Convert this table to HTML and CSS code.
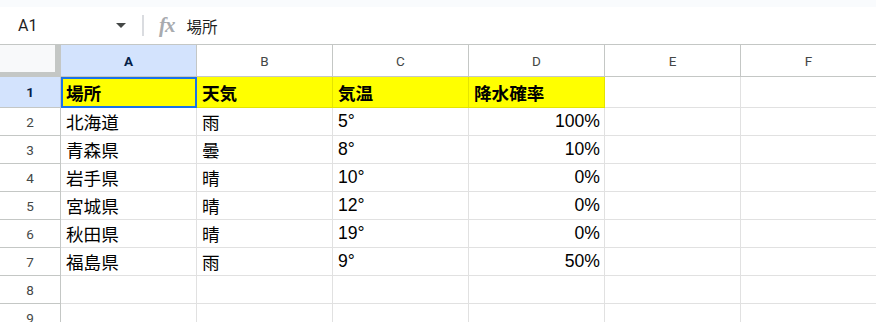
FILE: index.html
```html
<!DOCTYPE html>
<html lang="ja">
<head>
    <meta charset="UTF-8">
    <meta name="viewport" content="width=device-width, initial-scale=1.0">
    <title>天気シート</title>
    <link rel="stylesheet" href="styles.css">
</head>
<body>
    <div class="topbar"></div>
    <!-- 이름 상자 + 수식 입력줄 -->
    <div class="formula-bar">
        <div class="name-box">
            <span class="name-ref">A1</span>
            <span class="name-arrow"></span>
        </div>
        <span class="fb-sep"></span>
        <span class="fx">fx</span>
        <span class="fb-value">場所</span>
    </div>

    <div class="sheet">
        <div class="corner"></div>
        <div class="col-head selected">A</div>
        <div class="col-head">B</div>
        <div class="col-head">C</div>
        <div class="col-head">D</div>
        <div class="col-head">E</div>
        <div class="col-head">F</div>

        <div class="row-head selected">1</div>
        <div class="cell hl bold active">場所</div>
        <div class="cell hl bold">天気</div>
        <div class="cell hl bold">気温</div>
        <div class="cell hl bold">降水確率</div>
        <div class="cell"></div>
        <div class="cell"></div>

        <div class="row-head">2</div>
        <div class="cell">北海道</div>
        <div class="cell">雨</div>
        <div class="cell">5°</div>
        <div class="cell num">100%</div>
        <div class="cell"></div>
        <div class="cell"></div>

        <div class="row-head">3</div>
        <div class="cell">青森県</div>
        <div class="cell">曇</div>
        <div class="cell">8°</div>
        <div class="cell num">10%</div>
        <div class="cell"></div>
        <div class="cell"></div>

        <div class="row-head">4</div>
        <div class="cell">岩手県</div>
        <div class="cell">晴</div>
        <div class="cell">10°</div>
        <div class="cell num">0%</div>
        <div class="cell"></div>
        <div class="cell"></div>

        <div class="row-head">5</div>
        <div class="cell">宮城県</div>
        <div class="cell">晴</div>
        <div class="cell">12°</div>
        <div class="cell num">0%</div>
        <div class="cell"></div>
        <div class="cell"></div>

        <div class="row-head">6</div>
        <div class="cell">秋田県</div>
        <div class="cell">晴</div>
        <div class="cell">19°</div>
        <div class="cell num">0%</div>
        <div class="cell"></div>
        <div class="cell"></div>

        <div class="row-head">7</div>
        <div class="cell">福島県</div>
        <div class="cell">雨</div>
        <div class="cell">9°</div>
        <div class="cell num">50%</div>
        <div class="cell"></div>
        <div class="cell"></div>

        <div class="row-head">8</div>
        <div class="cell"></div>
        <div class="cell"></div>
        <div class="cell"></div>
        <div class="cell"></div>
        <div class="cell"></div>
        <div class="cell"></div>

        <div class="row-head">9</div>
        <div class="cell"></div>
        <div class="cell"></div>
        <div class="cell"></div>
        <div class="cell"></div>
        <div class="cell"></div>
        <div class="cell"></div>
    </div>
</body>
</html>
```

FILE: styles.css
```css
*{margin:0; padding:0; box-sizing:border-box;}
html,body{height:100%;}
body{
    overflow:hidden;
    background-color:#fff;
    font-family:Roboto, "Noto Sans CJK JP", sans-serif;
    color:#1f1f1f;
}

.topbar{
    height:7px;
    background-color:#f9fbfd;
}

/* formula bar */
.formula-bar{
    height:38px;
    display:flex;
    align-items:center;
    border-bottom:1px solid #c4c7c5;
}
.name-box{
    width:136px;
    display:flex;
    align-items:center;
    justify-content:space-between;
    padding:0 10px 0 18px;
}
.name-ref{
    font-size:16px;
    color:#1f1f1f;
}
.name-arrow{
    width:0; height:0;
    border-left:5px solid transparent;
    border-right:5px solid transparent;
    border-top:5px solid #444746;
}
.fb-sep{
    width:2px; height:21px;
    margin-left:6px;
    background-color:#dadce0;
}
.fx{
    margin-left:15px;
    font-family:"Liberation Serif", serif;
    font-style:italic;
    font-weight:bold;
    font-size:21px;
    letter-spacing:-1px;
    color:#a8abaf;
}
.fb-value{
    margin-left:12px;
    font-size:15.5px;
    font-family:"Noto Sans CJK JP", sans-serif;
    color:#1f1f1f;
}

/* grid */
.sheet{
    display:grid;
    grid-template-columns:61px repeat(6, 136px);
    grid-template-rows:32px 31px repeat(8, 28px);
}
.corner{
    background-color:#f8f9fa;
    border-right:6px solid #c4c7c5;
    border-bottom:5px solid #c4c7c5;
}
.col-head{
    display:flex;
    align-items:center;
    justify-content:center;
    background-color:#fff;
    border-right:1px solid #c4c7c5;
    border-bottom:1px solid #c4c7c5;
    font-size:13.5px;
    color:#444746;
}
.row-head{
    display:flex;
    align-items:center;
    justify-content:center;
    background-color:#fff;
    border-right:1px solid #c4c7c5;
    border-bottom:1px solid #c4c7c5;
    font-size:13.5px;
    color:#444746;
}
.col-head.selected,
.row-head.selected{
    background-color:#d3e3fd;
    color:#041e49;
    font-weight:bold;
}

.cell{
    display:flex;
    align-items:center;
    padding:0 4px 0 5px;
    border-right:1px solid #e1e1e1;
    border-bottom:1px solid #e1e1e1;
    font-family:"Liberation Sans", "Noto Sans CJK JP", sans-serif;
    font-size:17.6px;
    color:#000;
    white-space:nowrap;
    overflow:hidden;
}
.cell.num{
    justify-content:flex-end;
}
.cell.bold{
    font-weight:bold;
}
.cell.hl{
    background-color:#ffff00;
    border-color:#e4e400;
}
/* 선택된 셀 */
.cell.active{
    outline:2px solid #1a73e8;
    outline-offset:-2px;
}
```
